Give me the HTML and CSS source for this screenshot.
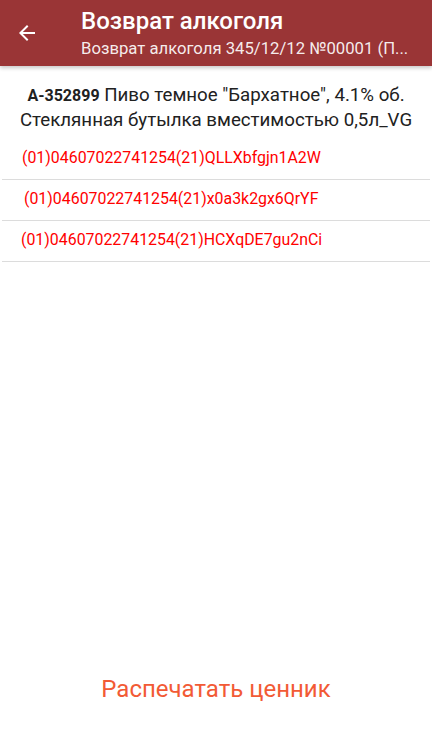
FILE: index.html
```html
<!DOCTYPE html>
<html lang="ru">
<head>
<meta charset="utf-8">
<link rel="stylesheet" href="styles.css">
</head>
<body>
<div class="screen">
  <header class="appbar">
    <div class="back">
      <svg width="24" height="24" viewBox="0 0 24 24"><path d="M20 11H7.83l5.59-5.59L12 4l-8 8 8 8 1.41-1.41L7.83 13H20v-2z" fill="#fff"/></svg>
    </div>
    <div class="titles">
      <div class="title">Возврат алкоголя</div>
      <div class="subtitle">Возврат алкоголя 345/12/12 №00001 (П...</div>
    </div>
  </header>
  <main class="content">
    <div class="item">
      <div class="line"><span class="article">А-352899</span> Пиво темное "Бархатное", 4.1% об.</div>
      <div class="line">Стеклянная бутылка вместимостью 0,5л_VG</div>
    </div>
    <ul class="codes">
      <li class="code">(01)04607022741254(21)QLLXbfgjn1A2W</li>
      <li class="code shift">(01)04607022741254(21)x0a3k2gx6QrYF</li>
      <li class="code back1">(01)04607022741254(21)HCXqDE7gu2nCi</li>
    </ul>
  </main>
  <footer class="footer">
    <button class="print">Распечатать ценник</button>
  </footer>
</div>
</body>
</html>
```
FILE: styles.css
```css
* { box-sizing: border-box; }
html, body { margin: 0; padding: 0; }
body { font-family: Roboto, "Noto Sans", sans-serif; background: #fff; }
.screen { width: 432px; height: 739px; display: flex; flex-direction: column; }
.appbar {
  height: 66px; background: #9a3536; display: flex; align-items: center;
  box-shadow: 0 2px 4px rgba(0,0,0,0.22); position: relative; z-index: 1;
}
.back { width: 54px; padding-left: 15px; display: flex; align-items: center; }
.titles { padding-left: 27px; color: #fff; }
.title { font-size: 24px; font-weight: 500; line-height: 28px; margin-top: 0; }
.subtitle { font-size: 16.7px; line-height: 20px; margin-top: 4px; color: rgba(255,255,255,0.92); }
.content { flex: 1; }
.item {
  text-align: center; font-size: 18.7px; line-height: 24px; color: #212121;
  padding: 17px 10px 0;
}
.item .article { font-weight: 700; font-size: 16px; }
.codes { list-style: none; margin: 7px 0 0; padding: 0; }
.code {
  height: 41px; line-height: 38px; padding-left: 20px; font-size: 15.9px; color: #f00;
  margin: 0 2px; border-bottom: 1px solid #dcdcdc;
}
.code.shift { padding-left: 22px; }
.code.back1 { padding-left: 19px; }
.footer { height: 100px; display: flex; justify-content: center; padding-top: 28px; }
.print {
  background: none; border: none; font-family: inherit; font-size: 24px;
  color: #f25a35; height: 44px; padding: 0;
}
```
